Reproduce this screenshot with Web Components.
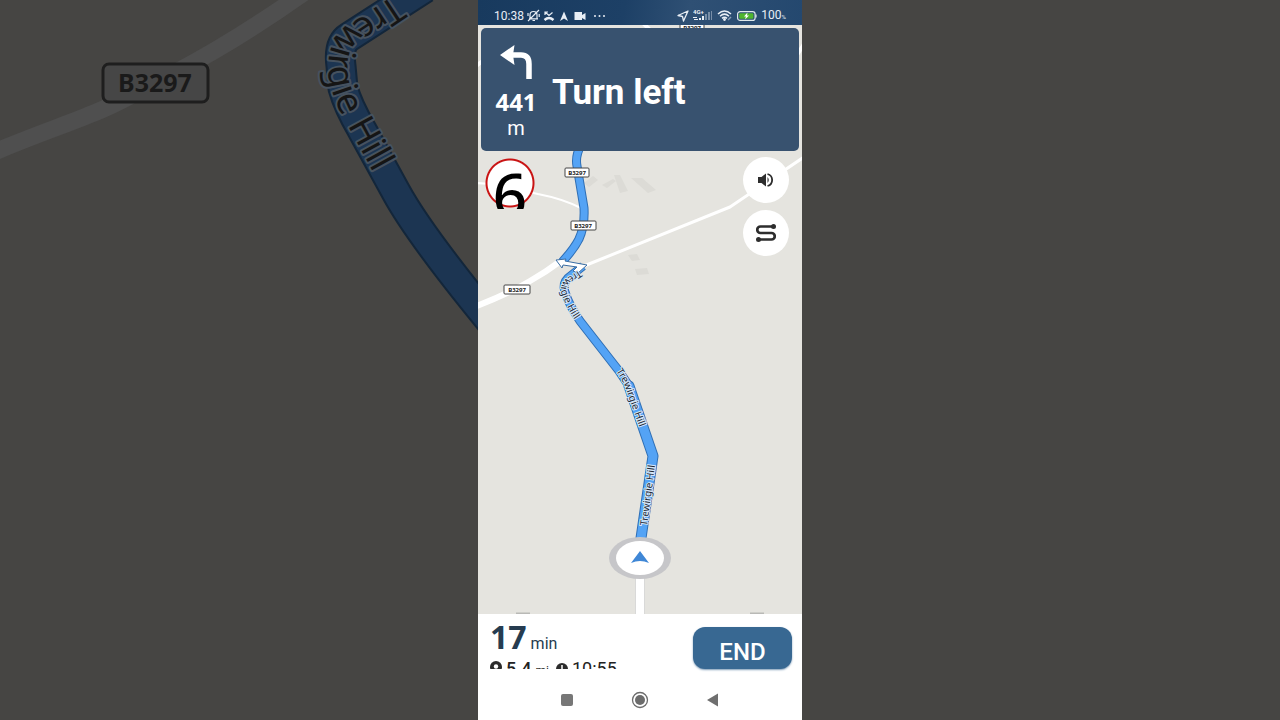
<!DOCTYPE html>
<html lang="en">
<head>
<meta charset="utf-8">
<meta name="viewport" content="width=device-width, initial-scale=1">
<title>Navigation</title>
<style>
  body {
    margin: 0;
    background: #464543;
    font-family: Roboto, "Noto Sans", sans-serif;
  }
</style>
</head>
<body>
<nav-app></nav-app>

<script>
(function() {

  function define(name, html) {
    const template = document.createElement('template');
    template.innerHTML = html;
    window.customElements.define(name, class extends HTMLElement {
      constructor() {
        super();
        this.attachShadow({mode: 'open'});
        this.shadowRoot.appendChild(template.content.cloneNode(true));
      }
    });
  }

  // Dimmed close-up of the map that fills the space beside the phone
  define('map-backdrop', `
  <style>
:host {
    display: block;
    min-width: 0;
    overflow: hidden;
    background: #464543;
}
svg {
    display: block;
    width: 100%;
    height: 100%;
}
text {
    font-family: "Noto Sans", sans-serif;
    fill: #151515;
}
.street {
    font-size: 36px;
    paint-order: stroke;
    stroke: #46525f;
    stroke-width: 4px;
    stroke-linejoin: round;
}
.shield {
    font-size: 25px;
    font-weight: 700;
    fill: #1a1a1a;
}
  </style>
  <svg viewBox="0 0 478 720" preserveAspectRatio="xMaxYMin slice" aria-hidden="true">
    <path d="M-10 154 C50 128 90 118 130 96 C190 66 240 38 305 -8" fill="none" stroke="#4f4f4f" stroke-width="17"/>
    <g fill="none" stroke-linejoin="round">
      <path d="M425 -12 L349 37 Q338 44 341 66 L343 88 Q348 106 362 130 L396 192 Q420 236 496 328" stroke="#13263a" stroke-width="31"/>
      <path d="M425 -12 L349 37 Q338 44 341 66 L343 88 Q348 106 362 130 L396 192 Q420 236 496 328" stroke="#1c3552" stroke-width="27"/>
    </g>
    <path id="street" d="M394 -5 L343 29 Q327 42 328 74 Q331 94 342 115 L397 216" fill="none"/>
    <text class="street"><textPath href="#street">Trewirgie Hill</textPath></text>
    <rect x="103" y="64" width="105" height="38" rx="6" fill="#464646" stroke="#1e1e1e" stroke-width="3"/>
    <text class="shield" x="155" y="92" text-anchor="middle">B3297</text>
  </svg>
  `);

  define('status-bar', `
  <style>
:host {
    display: flex;
    justify-content: space-between;
    align-items: center;
    box-sizing: border-box;
    height: 25px;
    padding: 6px 16px 0;
    color: #e8eef5;
    font-size: 12px;
    line-height: 14px;
    background: linear-gradient(100deg, #183a5e 0%, #1d4066 45%, #2f5074 65%, #24486f 100%);
}
div {
    display: flex;
    align-items: center;
    gap: 4px;
}
.left {
    gap: 3px;
}
svg {
    display: block;
}
small {
    font-size: 6px;
}
.signal {
    font: 700 6px Roboto, sans-serif;
}
.level {
    display: flex;
    align-items: baseline;
    gap: 0;
}
  </style>
  <div class="left">
    <span>10:38</span>
    <svg width="13" height="13" viewBox="0 0 13 13" fill="none" stroke="currentColor" stroke-width="1.2"><path d="M3 9.5 V6 Q3 2.5 6.5 2.5 Q10 2.5 10 6 V9.5 M2 9.8 H11 M5.5 11.5 H8 M12 1 L1 12 M1 4 V7 M12.2 5 V8"/></svg>
    <svg width="12" height="12" viewBox="0 0 11 12" fill="none" stroke="currentColor"><path d="M1.5 2 L5.5 5.5 L9 2.5 M1.5 5 V2 H4.5" stroke-width="1.2"/><path d="M1 10 Q5.500 6 10 10" stroke-width="2.400"/></svg>
    <svg width="12" height="12" viewBox="0 0 10 12" fill="currentColor"><path d="M5 1.500 L9 11 L5 8.500 L1 11 Z"/></svg>
    <svg width="14" height="12" viewBox="0 0 14 12" fill="currentColor"><path d="M2 2 H9 V5 L12.500 3 V10 L9 8 V10 H1.500 V2 Z"/></svg>
    <svg width="20" height="12" viewBox="0 0 20 12" fill="currentColor"><circle cx="5" cy="6" r="1"/><circle cx="9.500" cy="6" r="1"/><circle cx="14" cy="6" r="1"/></svg>
  </div>
  <div>
    <svg width="12" height="12" viewBox="0 0 12 12" fill="none" stroke="currentColor" stroke-width="1.300" stroke-linejoin="round"><path d="M11 1 L1 5.500 L5.500 6.500 L6.500 11 Z"/></svg>
    <svg class="signal" width="20" height="13" viewBox="0 0 20 13" fill="currentColor"><text x="0" y="5">4G+</text><path d="M0 8 h4 v1 h-4z M1 10 h4 v1 h-4z M6 9 h2 v2 h-2z M9 7 h2 v4 h-2z"/><path d="M12 5 h2 v6 h-2z M15 3 h2 v8 h-2z M18 2 h1 v9 h-1z" opacity=".4"/></svg>
    <svg width="16" height="13" viewBox="0 0 16 13" fill="none" stroke="currentColor" stroke-width="1.500"><path d="M1 5 Q7.500 -1 14 5 M3 7.200 Q7.500 3 12 7.200 M5 9.400 Q7.500 7 10 9.400"/><circle cx="7.500" cy="10.500" r=".7"/><path d="M11 11 l3 -3" opacity=".5"/></svg>
    <svg width="20" height="12" viewBox="0 0 20 12"><rect x=".6" y="1.600" width="17.500" height="8.800" rx="2.500" fill="none" stroke="#dfe8ea" stroke-width="1.200"/><rect x="2.200" y="3.200" width="14.200" height="5.600" rx="1" fill="#4fb52f"/><path d="M19 4.500 v3" stroke="#dfe8ea" stroke-width="1.200"/><path d="M10.500 2.500 L7 6.500 H9 L8 9.500 L12 5.500 H10 Z" fill="#fff"/></svg>
    <span class="level">100<small>%</small></span>
  </div>
  `);

  define('turn-banner', `
  <style>
:host {
    display: flex;
    align-items: center;
    gap: 13px;
    padding: 17px 12px 11px;
    border-radius: 5px;
    color: #fff;
    background: #38526f;
}
.distance {
    display: flex;
    flex-direction: column;
    align-items: center;
    width: 46px;
}
svg {
    display: block;
    margin-bottom: 11px;
}
strong {
    font: 700 24px/24px "Noto Sans", sans-serif;
}
span {
    margin-top: 2px;
    font-size: 20px;
    line-height: 24px;
}
h1 {
    margin: 0;
    font-size: 35px;
    font-weight: 700;
    line-height: 40px;
}
  </style>
  <div class="distance">
    <svg width="32" height="34" viewBox="0 0 32 34" aria-hidden="true">
      <path d="M0 10 L14.500 0 L13 10 L14.500 20 Z" fill="#fff"/>
      <path d="M11 10 H21 Q29 10 29 19 V34" fill="none" stroke="#fff" stroke-width="5.500"/>
    </svg>
    <strong>441</strong>
    <span>m</span>
  </div>
  <h1><slot></slot></h1>
  `);

  define('speed-sign', `
  <style>
:host {
    display: block;
    box-sizing: border-box;
    width: 50px;
    height: 52px;
    overflow: hidden;
    color: #000;
    font: 500 60px/74px "Noto Sans", sans-serif;
    text-align: center;
    background: radial-gradient(circle at 25px 26px, #fff 22px, #c91414 23px, #c91414 24px, transparent 25px);
}
  </style>
  <slot></slot>
  `);

  define('round-button', `
  <style>
:host {
    display: block;
}
button {
    display: grid;
    place-items: center;
    width: 46px;
    height: 46px;
    padding: 0;
    border: 0;
    border-radius: 50%;
    background: #fff;
}
  </style>
  <button type="button"><slot></slot></button>
  `);

  define('route-map', `
  <style>
:host {
    display: grid;
    min-height: 0;
    overflow: hidden;
    background: #e5e4df;
}
svg, .overlay {
    grid-area: 1 / 1;
    min-height: 0;
}
svg {
    display: block;
    width: 100%;
    height: 100%;
}
.overlay {
    z-index: 1;
}
.road {
    fill: none;
    stroke: #fff;
    stroke-linejoin: round;
}
.edge {
    fill: none;
    stroke: #2f6fb5;
}
.route {
    fill: none;
    stroke: #54a3f5;
}
.edge, .route {
    stroke-linejoin: round;
}
text {
    font-family: "Noto Sans", sans-serif;
}
.street {
    font-size: 10px;
    fill: #1d2a38;
    paint-order: stroke;
    stroke: #d8e8f8;
    stroke-width: 2px;
    stroke-linejoin: round;
}
.shield rect {
    fill: #fff;
    stroke: #444;
}
.shield text {
    font-size: 6px;
    font-weight: 700;
    fill: #222;
    text-anchor: middle;
}
  </style>
  <svg viewBox="0 25 324 589" preserveAspectRatio="xMidYMid slice">
    <g fill="#dcdbd6">
      <path d="M106 183 l9 -7 5 4 -9 7z M124 185 l11 -6 3 2 -9 7z M136 175 l6 0 8 16 -8 2z M153 178 l11 0 14 12 -8 3z M150 255 l9 -1 3 6 -8 1z M157 269 l12 -1 2 6 -12 1z"/>
    </g>
    <path d="M38 614 h14 M272 614 h14" stroke="#b9b9b6" stroke-width="3"/>
    <path class="road" d="M162 20 L176 34 M-2 66 L6 60 M312 66 L326 44" stroke-width="4"/>
    <path class="road" d="M-2 183 L14 184 L60 194 Q86 199 105 209" stroke-width="2"/>
    <path class="road" d="M106 266 L252 207 L326 157" stroke-width="3"/>
    <path class="road" d="M-4 307 Q30 294 52 281 Q68 272 84 260" stroke-width="6"/>
    <path class="road" d="M162 570 V616" stroke-width="10" style="stroke:#d9d9d8"/>
    <path class="road" d="M162 570 V616" stroke-width="8"/>

    <path class="edge" d="M103 145 Q97 156 99 166 L106 208 Q107 226 101 239 Q96 249 84 262" stroke-width="9"/>
    <path class="edge" d="M105 266 L90 278 Q84 284 87 292 Q91 305 102 321 L141 371 L151 386" stroke-width="9"/>
    <path class="edge" d="M151 386 L175 456 L162 545" stroke-width="11" stroke-linecap="round"/>
    <path class="route" d="M103 145 Q97 156 99 166 L106 208 Q107 226 101 239 Q96 249 84 262" stroke-width="7"/>
    <path class="route" d="M105 266 L90 278 Q84 284 87 292 Q91 305 102 321 L141 371 L151 386" stroke-width="7"/>
    <path class="route" d="M151 386 L175 456 L162 545" stroke-width="9" stroke-linecap="round"/>

    <path id="upper" d="M101 270 L89 278 Q82 283 83 292 Q87 304 95 317 L106 334" fill="none"/>
    <path id="middle" d="M138 371 L146 384 L166 440" fill="none"/>
    <path id="lower" d="M169 526 L178 458" fill="none"/>
    <path d="M78 260 L88 259 L87 261 L109 265 L100 273 L95 271 L99 267 L85 265 L84 268 Z" fill="#fff" stroke="#3a6da3"/>
    <text class="street"><textPath href="#upper">Trewirgie Hill</textPath></text>
    <text class="street"><textPath href="#middle">Trewirgie Hill</textPath></text>
    <text class="street"><textPath href="#lower">Trewirgie Hill</textPath></text>

    <g class="shield">
      <rect x="202" y="23" width="24" height="9" rx="1"/><text x="214" y="30">B3297</text>
      <rect x="87" y="168" width="24" height="9" rx="1"/><text x="99" y="175">B3297</text>
      <rect x="93" y="221" width="25" height="9" rx="1"/><text x="105" y="228">B3297</text>
      <rect x="26" y="285" width="26" height="9" rx="1"/><text x="39" y="292">B3297</text>
    </g>

    <ellipse cx="162" cy="558" rx="31" ry="21" fill="#c6c6c9"/>
    <ellipse cx="162" cy="558" rx="24" ry="17" fill="#fff"/>
    <path d="M162 551 L171 563 Q162 559 153 563 Z" fill="#3f87d6"/>
  </svg>
  <div class="overlay"><slot></slot></div>
  `);

  define('trip-bar', `
  <style>
:host {
    display: flex;
    justify-content: space-between;
    align-items: flex-start;
    padding: 7px 10px 11px 12px;
    color: #222;
    background: #fff;
}
.info {
    height: 48px;
    overflow: hidden;
}
.time {
    display: flex;
    align-items: baseline;
    gap: 4px;
    height: 32px;
    color: #263c50;
    font-size: 16px;
    line-height: 32px;
}
.time strong {
    font: 700 32px/32px "Noto Sans", sans-serif;
}
.details {
    display: flex;
    align-items: flex-start;
    gap: 7px;
    margin-top: 6px;
    font-size: 18px;
    line-height: 20px;
}
.details span {
    display: flex;
    align-items: baseline;
    gap: 4px;
}
.details b {
    font-weight: 500;
}
small {
    font-size: 12px;
}
svg {
    align-self: flex-start;
    margin-top: 2px;
}
button {
    width: 99px;
    height: 42px;
    margin-top: 6px;
    padding: 8px 0 0;
    border: 0;
    border-radius: 12px;
    color: #fff;
    font: 500 24px/28px Roboto, sans-serif;
    background: #386892;
    box-shadow: 0 1px 2px #7f9cb8;
}
  </style>
  <div class="info">
    <div class="time"><strong>17</strong><span>min</span></div>
    <div class="details">
      <span><svg width="12" height="16" viewBox="0 0 12 16" aria-hidden="true"><path d="M6 0 a6 6 0 0 1 6 6 Q12 10 6 16 Q0 10 0 6 a6 6 0 0 1 6 -6z" fill="#2b2b2b"/><circle cx="6" cy="5.500" r="2.200" fill="#fff"/></svg><b>5.4</b><small>mi</small></span>
      <span><svg width="12" height="14" viewBox="0 0 12 14" aria-hidden="true"><circle cx="6" cy="8" r="6" fill="#2b2b2b"/><path d="M6 4 V8.500 L9 10" fill="none" stroke="#fff" stroke-width="1.500"/></svg>10:55</span>
    </div>
  </div>
  <button type="button">END</button>
  `);

  define('system-nav', `
  <style>
:host {
    display: flex;
    justify-content: center;
    align-items: center;
    gap: 55px;
    height: 40px;
    background: #fff;
}
button {
    display: block;
    width: 18px;
    height: 18px;
    padding: 0;
    border: 0;
    background: none;
}
svg {
    display: block;
}
  </style>
  <button type="button" aria-label="Recent apps"><svg width="18" height="18" viewBox="0 0 18 18"><rect x="3" y="3" width="12" height="12" rx="2" fill="#777"/></svg></button>
  <button type="button" aria-label="Home"><svg width="18" height="18" viewBox="0 0 18 18"><circle cx="9" cy="9" r="7.500" fill="none" stroke="#6c6c6c" stroke-width="1.300"/><circle cx="9" cy="9" r="5" fill="#6c6c6c"/></svg></button>
  <button type="button" aria-label="Back"><svg width="18" height="18" viewBox="0 0 18 18"><path d="M14 2.500 V15.500 L3 9 Z" fill="#6f6f6f"/></svg></button>
  `);

  define('nav-app', `
  <style>
:host {
    display: grid;
    grid-template-columns: minmax(0, 1fr) auto minmax(0, 1fr);
    height: 100vh;
    overflow: hidden;
}
.phone {
    display: grid;
    grid-template-rows: auto minmax(0, 1fr) auto auto;
    height: 100vh;
    aspect-ratio: 9 / 20;
    background: #fff;
}
turn-banner {
    margin: 3px 3px 0;
}
.controls {
    display: flex;
    justify-content: space-between;
    align-items: flex-start;
    padding: 6px 13px 0 7px;
}
.buttons {
    display: flex;
    flex-direction: column;
    gap: 7px;
}
  </style>
  <map-backdrop></map-backdrop>
  <main class="phone">
    <status-bar></status-bar>
    <route-map>
      <turn-banner>Turn left</turn-banner>
      <div class="controls">
        <speed-sign>6</speed-sign>
        <div class="buttons">
          <round-button>
            <svg width="16" height="16" viewBox="0 0 16 16" role="img" aria-label="Sound"><path d="M0 5 H3.500 L8 1.500 V14.500 L3.500 11 H0 Z" fill="#2d2d2d"/><path d="M9.500 5 Q12 8 9.500 11" fill="#2d2d2d"/><path d="M9.500 2 A6.200 6.200 0 0 1 9.500 14" fill="none" stroke="#2d2d2d" stroke-width="1.800"/></svg>
          </round-button>
          <round-button>
            <svg width="20" height="18" viewBox="0 0 20 18" role="img" aria-label="Route overview"><path d="M17 2.500 H4.500 A3.200 3.200 0 0 0 4.500 9 H15.500 A3.200 3.200 0 0 1 15.500 15.500 H3" fill="none" stroke="#2d2d2d" stroke-width="2.700"/><circle cx="17.500" cy="2.500" r="2.500" fill="#2d2d2d"/><circle cx="2.500" cy="15.500" r="2.500" fill="#2d2d2d"/></svg>
          </round-button>
        </div>
      </div>
    </route-map>
    <trip-bar></trip-bar>
    <system-nav></system-nav>
  </main>
  <aside></aside>
  `);

}());
</script>
</body>
</html>
